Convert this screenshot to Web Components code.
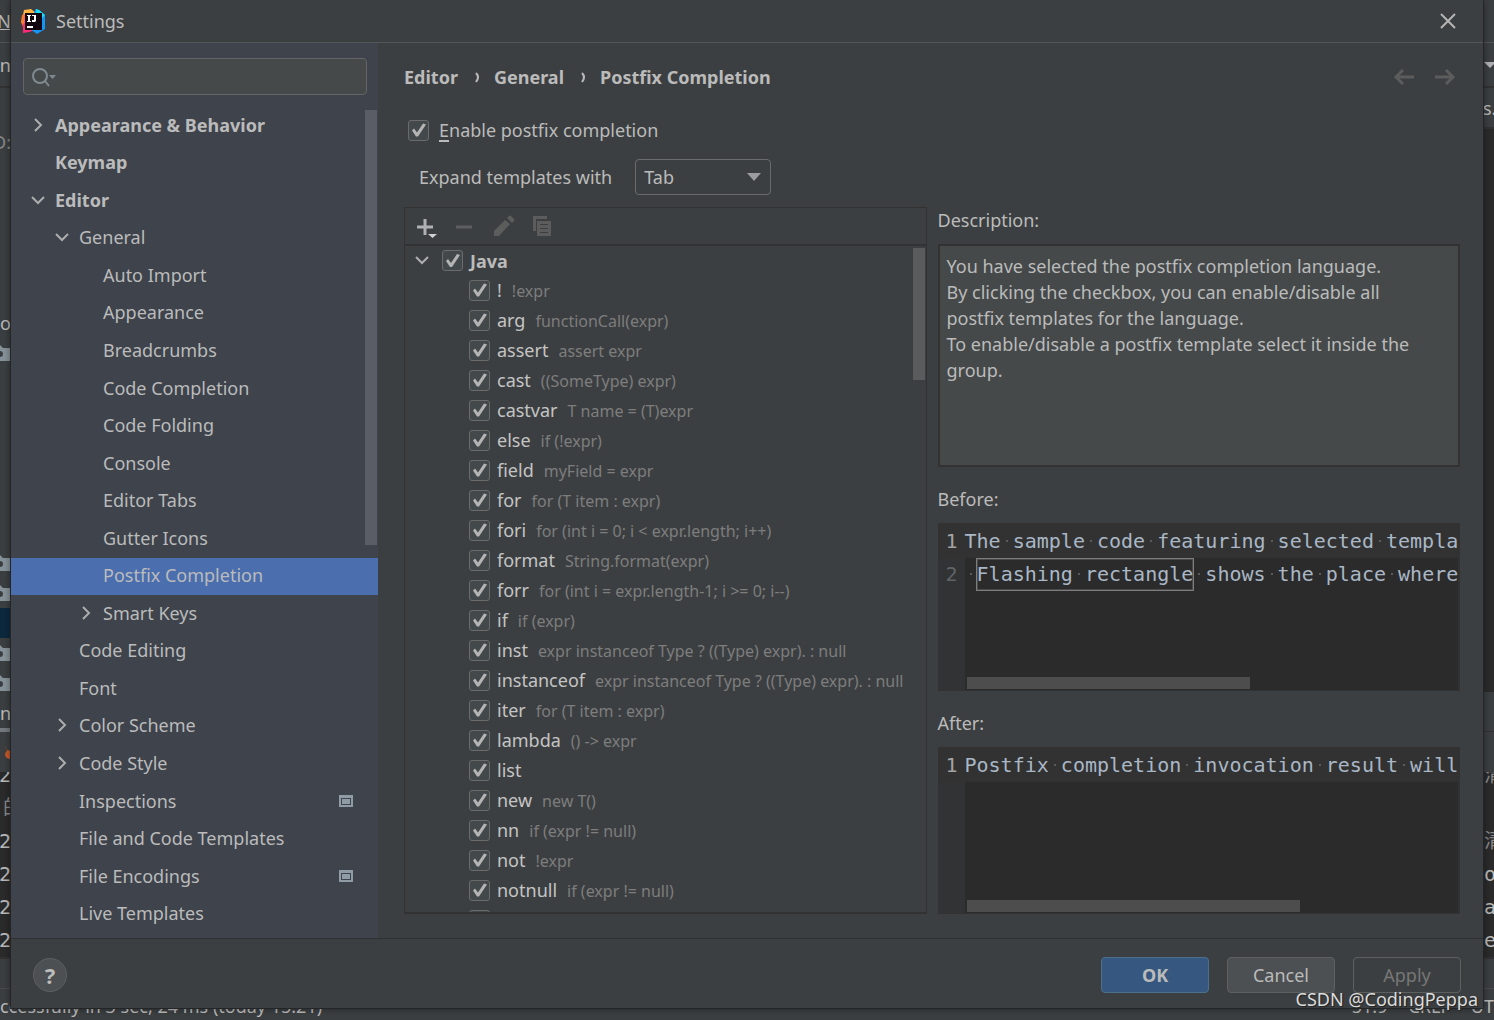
<!DOCTYPE html>
<html lang="en">
<head>
<meta charset="utf-8">
<title>Settings</title>
<style>
  html, body { height: 100%; margin: 0; }
  body {
    overflow: hidden;
    background: #3c3f41;
    color: #bbbbbb;
    font: 18px/26px "Noto Sans", "Open Sans", "Noto Sans CJK SC", sans-serif;
  }
</style>
</head>
<body>
<settings-app></settings-app>

<script>
const define = (name, html, setup) => {
  const template = document.createElement('template');
  template.innerHTML = html;
  customElements.define(name, class extends HTMLElement {
    constructor() {
      super();
      this.attachShadow({ mode: 'open' }).append(template.content.cloneNode(true));
    }
    connectedCallback() {
      if (setup && !this.ready) { this.ready = true; setup(this, this.shadowRoot); }
    }
  });
};

/* ---------- check box with its label ---------- */
define('check-box', `
  <style>
    :host { display: block; min-width: 0; }
    label { display: flex; align-items: center; gap: 7px; white-space: nowrap; }
    :host([wide]) label { gap: 10px; }
    input {
      appearance: none; flex: none; box-sizing: border-box; width: 21px; height: 21px; margin: 0;
      border: 1px solid #6b6b6b; border-radius: 3px; background: #43494a;
    }
    input::before {
      content: ""; display: block; width: 19px; height: 19px; background: #b4b4b4;
      clip-path: polygon(14px 3px, 17px 4px, 9px 16px, 7px 16px, 3px 10px, 5px 8px, 8px 12px);
    }
    input:not(:checked)::before { display: none; }
  </style>
  <label><input type="checkbox" checked><span><slot></slot></span></label>`);

/* ---------- row of the settings tree ---------- */
define('tree-row', `
  <style>
    :host { display: flex; align-items: center; min-height: 0; padding-right: 25px; white-space: nowrap; }
    :host([bold]) { font-weight: 700; }
    :host([selected]) { background: #4b6eaf; }
    .arrow { flex: none; box-sizing: content-box; width: 16px; height: 16px; padding: 0 9px 0 19px; }
    :host([level="1"]) .arrow { padding-left: 43px; }
    :host([level="2"]) .arrow { padding-left: 67px; }
    path { display: none; fill: none; stroke: #adadad; stroke-width: 2; }
    :host([state="closed"]) .closed, :host([state="open"]) .open { display: block; }
    .text { flex: 1; padding-bottom: 2px; }
    .project { display: none; flex: none; margin-bottom: 2px; }
    :host([project]) .project { display: block; }
  </style>
  <svg class="arrow" viewBox="0 0 16 16"><path class="closed" d="M5 1l6 6-6 6"/><path class="open" d="M2 4l6 6 6-6"/></svg>
  <span class="text"><slot></slot></span>
  <svg class="project" width="14" height="12" viewBox="0 0 14 12"><path style="display:block;fill:#8f9ba5;fill-rule:evenodd;stroke:none" d="M0 0h14v12H0zM2 3v7h10V3zM3 4h8v5H3z"/></svg>`);

/* ---------- left pane ---------- */
define('settings-sidebar', `
  <style>
    :host { display: flex; flex-direction: column; box-sizing: border-box; width: 367px; padding: 15px 0 5px; background: #3e434c; min-height: 0; }
    .search { display: flex; align-items: center; box-sizing: border-box; flex: none; height: 37px; margin: 0 11px 12px 12px; padding-left: 8px;
      border: 1px solid #646464; border-radius: 4px; background: #45494a; }
    input { flex: 1; min-width: 0; border: 0; outline: 0; background: none; color: inherit; font: inherit; }
    nav { position: relative; flex: 1; min-height: 0; display: grid; grid-auto-rows: 1fr; }
    .bar { position: absolute; top: 3px; right: 1px; width: 12px; height: 435px; background: #5a5d65; }
  </style>
  <div class="search">
    <svg width="25" height="20" viewBox="0 0 25 20" fill="none" stroke="#7f8b91" stroke-width="2"><circle cx="8" cy="9" r="7"/><path d="M13 14l4 5"/><path d="M17 8h7l-3.500 4z" fill="#7f8b91" stroke="none"/></svg>
    <input type="text" aria-label="Search settings">
  </div>
  <nav aria-label="Settings categories">
    <tree-row bold state="closed">Appearance &amp; Behavior</tree-row>
    <tree-row bold>Keymap</tree-row>
    <tree-row bold state="open">Editor</tree-row>
    <tree-row level="1" state="open">General</tree-row>
    <tree-row level="2">Auto Import</tree-row>
    <tree-row level="2">Appearance</tree-row>
    <tree-row level="2">Breadcrumbs</tree-row>
    <tree-row level="2">Code Completion</tree-row>
    <tree-row level="2">Code Folding</tree-row>
    <tree-row level="2">Console</tree-row>
    <tree-row level="2">Editor Tabs</tree-row>
    <tree-row level="2">Gutter Icons</tree-row>
    <tree-row level="2" selected>Postfix Completion</tree-row>
    <tree-row level="2" state="closed">Smart Keys</tree-row>
    <tree-row level="1">Code Editing</tree-row>
    <tree-row level="1">Font</tree-row>
    <tree-row level="1" state="closed">Color Scheme</tree-row>
    <tree-row level="1" state="closed">Code Style</tree-row>
    <tree-row level="1" project>Inspections</tree-row>
    <tree-row level="1">File and Code Templates</tree-row>
    <tree-row level="1" project>File Encodings</tree-row>
    <tree-row level="1">Live Templates</tree-row>
    <div class="bar"></div>
  </nav>`);

/* ---------- template list ---------- */
const TEMPLATES = [
  ['!', '!expr'], ['arg', 'functionCall(expr)'], ['assert', 'assert expr'], ['cast', '((SomeType) expr)'],
  ['castvar', 'T name = (T)expr'], ['else', 'if (!expr)'], ['field', 'myField = expr'], ['for', 'for (T item : expr)'],
  ['fori', 'for (int i = 0; i < expr.length; i++)'], ['format', 'String.format(expr)'],
  ['forr', 'for (int i = expr.length-1; i >= 0; i--)'], ['if', 'if (expr)'],
  ['inst', 'expr instanceof Type ? ((Type) expr). : null'], ['instanceof', 'expr instanceof Type ? ((Type) expr). : null'],
  ['iter', 'for (T item : expr)'], ['lambda', '() -> expr'], ['list', ''], ['new', 'new T()'],
  ['nn', 'if (expr != null)'], ['not', '!expr'], ['notnull', 'if (expr != null)'], ['', '']
];
define('template-list', `
  <style>
    :host { display: flex; flex-direction: column; box-sizing: border-box; min-width: 0; min-height: 0; border: 1px solid #323232; border-bottom-width: 2px; }
    .tools { display: flex; align-items: center; box-sizing: border-box; flex: none; height: 38px; padding: 2px 0 0 10px; gap: 15px; border-bottom: 2px solid #323232; }
    button { display: flex; width: 24px; height: 24px; padding: 0; border: 0; background: none; }
    .list { position: relative; flex: 1; min-height: 0; overflow: hidden; padding-right: 20px; }
    .group, .item { display: flex; align-items: center; height: 30px; overflow: hidden; }
    .group { height: 29px; padding-left: 9px; gap: 12px; font-weight: 700; }
    .item { padding-left: 64px; }
    .hint { margin-left: 10px; font-size: 16px; color: #7d7d7d; }
    .item check-box { color: #c4c4c4; }
    .bar { position: absolute; top: 2px; right: 1px; width: 12px; height: 132px; background: #595b5d; }
  </style>
  <div class="tools">
    <button aria-label="Add"><svg width="24" height="24"><path d="M2 12h16M10 4v16" stroke="#afb1b3" stroke-width="3"/><path d="M13 19h9l-4.500 4z" fill="#d0d0d0"/></svg></button>
    <button aria-label="Remove" disabled><svg width="24" height="24"><path d="M2 12h16" stroke="#5c5e60" stroke-width="3"/></svg></button>
    <button aria-label="Edit" disabled><svg width="24" height="24"><path d="M1 16L12 5l5 4L6 21H1zM14 3l2-2q1-1 2 0l3 3q1 1 0 2l-2 2z" fill="#5c5c5c"/></svg></button>
    <button aria-label="Duplicate" disabled><svg width="24" height="24"><path d="M1 1h14v3H4v12H1z" fill="#5c5c5c"/><path d="M5 6h14v15H5zM8 9v1h8V9zM8 13v1h8v-1zM8 17v1h8v-1z" fill="#5c5c5c" fill-rule="evenodd"/></svg></button>
  </div>
  <div class="list">
    <div class="group"><svg width="16" height="16" fill="none" stroke="#adadad" stroke-width="2"><path d="M2 4l6 6 6-6"/></svg><check-box>Java</check-box></div>
    <div class="bar"></div>
  </div>`, (host, root) => {
  const list = root.querySelector('.list');
  for (const [key, hint] of TEMPLATES) {
    const row = document.createElement('div');
    row.className = 'item';
    const box = document.createElement('check-box');
    box.append(key);
    if (hint) {
      const span = document.createElement('span');
      span.className = 'hint';
      span.textContent = hint;
      box.append(span);
    }
    row.append(box);
    list.append(row);
  }
});

/* ---------- small read-only code viewer ---------- */
define('code-viewer', `
  <style>
    :host { position: relative; display: flex; flex-direction: column; box-sizing: border-box; min-height: 0; min-width: 0; overflow: hidden;
      border: solid #323232; border-width: 2px 2px 1px 0; background: linear-gradient(90deg, #313335 27px, #2b2b2b 27px);
      font: 20px/33px "DejaVu Sans Mono", "Liberation Mono", monospace; color: #a9b7c6; }
    .line { display: flex; flex: none; height: 33px; white-space: pre; }
    .line:first-child { background: #323232; }
    .no { flex: none; width: 20px; padding-right: 7px; text-align: right; color: #606366; }
    .line:first-child .no { color: #a4a3a3; }
    .sp { background: linear-gradient(#5a5a5a, #5a5a5a) center / 2px 2px no-repeat; }
    .box { display: inline-block; height: 31px; line-height: 31px; margin-top: 1px; box-shadow: 0 0 0 1px #7d7d7d, inset 0 0 0 1px #4a4a4a; }
    .bar { position: absolute; bottom: 1px; left: 29px; height: 12px; width: 283px; background: #4d4d4d; }
    :host([long]) .bar { width: 333px; }
  </style>
  <div class="bar"></div>`, (host, root) => {
  const put = (parent, text) => {
    for (const part of text.split(/( )/)) {
      if (part === ' ') {
        const s = document.createElement('span');
        s.className = 'sp'; s.textContent = ' ';
        parent.append(s);
      } else parent.append(part);
    }
  };
  const lines = host.getAttribute('code').split('|').map((text, i) => {
    const line = document.createElement('div');
    line.className = 'line';
    const no = document.createElement('span');
    no.className = 'no'; no.textContent = i + 1;
    const code = document.createElement('span');
    const [a, b, c] = text.split(/[\[\]]/);
    put(code, a);
    if (b) {
      const box = document.createElement('span');
      box.className = 'box';
      put(box, b);
      code.append(box);
      put(code, c);
    }
    line.append(no, code);
    return line;
  });
  root.prepend(...lines);
});

/* ---------- right pane ---------- */
define('postfix-page', `
  <style>
    :host { display: flex; flex-direction: column; flex: 1; min-width: 0; min-height: 0; box-sizing: border-box; padding: 19px 23px 24px 26px; }
    .crumbs { display: flex; align-items: center; gap: 14px; height: 30px; flex: none; font-weight: 700; }
    .crumbs a { color: inherit; text-decoration: none; }
    .nav { display: flex; gap: 16px; margin: 0 3px 0 auto; }
    .nav button { display: flex; width: 24px; height: 24px; padding: 0; border: 0; background: none; }
    .enable { margin: 27px 0 0 4px; height: 22px; display: flex; align-items: center; }
    u { text-underline-offset: 3px; text-decoration-thickness: 2px; }
    .expand { display: flex; align-items: center; gap: 23px; margin: 18px 0 12px 15px; }
    .select { position: relative; }
    select { appearance: none; display: block; box-sizing: border-box; width: 136px; height: 36px; padding: 0 8px; border: 1px solid #6b6b6b; border-radius: 4px; background: #3c3f41; color: inherit; font: inherit; }
    .select svg { position: absolute; right: 10px; top: 14px; pointer-events: none; }
    .body { flex: 1; min-height: 0; display: grid; grid-template-columns: 1fr 1fr; grid-template-rows: 100%; gap: 11px; }
    .side { display: grid; grid-template-rows: auto 4fr auto 3fr auto 3fr; min-width: 0; min-height: 0; }
    h3 { margin: 0 0 11px; font: inherit; }
    h3 + * + h3 { margin-top: 19px; }
    .desc { min-height: 0; box-sizing: border-box; padding: 7px 30px 0 7px; border: 2px solid #323232; background: #45494a; overflow: hidden; }
    p { margin: 0; }
  </style>
  <div class="crumbs">
    <a href="#editor">Editor</a>
    <svg width="8" height="12" fill="none" stroke="#bbb" stroke-width="2"><path d="M4 2q4 4 0 9"/></svg>
    <a href="#general">General</a>
    <svg width="8" height="12" fill="none" stroke="#bbb" stroke-width="2"><path d="M4 2q4 4 0 9"/></svg>
    <a href="#postfix">Postfix Completion</a>
    <div class="nav">
      <button aria-label="Back" disabled><svg width="24" height="24" fill="none" stroke="#5c5c5c" stroke-width="3"><path d="M21 12H4M10 5l-7 7 7 7"/></svg></button>
      <button aria-label="Forward" disabled><svg width="24" height="24" fill="none" stroke="#5c5c5c" stroke-width="3"><path d="M2 12h17M13 5l7 7-7 7"/></svg></button>
    </div>
  </div>
  <div class="enable"><check-box wide><u>E</u>nable postfix completion</check-box></div>
  <div class="expand">
    <label for="key">Expand templates with</label>
    <div class="select"><select id="key"><option>Tab</option></select>
      <svg width="14" height="8"><path d="M0 0h14L7 8z" fill="#9a9c9d"/></svg></div>
  </div>
  <div class="body">
    <template-list></template-list>
    <div class="side">
      <h3>Description:</h3>
      <div class="desc">
        <p>You have selected the postfix completion language.</p>
        <p>By clicking the checkbox, you can enable/disable all postfix templates for the language.</p>
        <p>To enable/disable a postfix template select it inside the group.</p>
      </div>
      <h3>Before:</h3>
      <code-viewer code="The sample code featuring selected templa| [Flashing rectangle] shows the place where"></code-viewer>
      <h3>After:</h3>
      <code-viewer long code="Postfix completion invocation result will"></code-viewer>
    </div>
  </div>`);

/* ---------- dialog window ---------- */
define('settings-dialog', `
  <style>
    :host { display: flex; flex-direction: column; background: #3c3f41; box-shadow: 0 0 8px rgba(0,0,0,.5), 0 0 0 1px #2f3132; overflow: hidden; }
    header { display: flex; align-items: center; flex: none; height: 42px; padding: 0 23px 0 10px; border-bottom: 1px solid #515658; }
    h1 { flex: 1; margin: 0 0 0 10px; font: inherit; }
    header button { display: flex; width: 24px; height: 24px; padding: 4px; border: 0; background: none; }
    main { display: flex; flex: 1; min-height: 0; }
    footer { display: flex; align-items: center; gap: 18px; flex: none; box-sizing: border-box; height: 70px; padding: 2px 22px 0; border-top: 1px solid #2f3233; }
    footer button { box-sizing: border-box; width: 108px; height: 36px; padding: 0; border: 1px solid #5e6060; border-radius: 4px; background: #4c5052; color: inherit; font: inherit; }
    footer .ok { background: #365880; border-color: #4c708c; font-weight: 700; }
    footer .off { background: none; color: #777777; }
    footer .help { width: 34px; height: 34px; margin-right: auto; border-radius: 50%; font-weight: 700; font-size: 22px; line-height: 32px; }
  </style>
  <header>
    <svg width="25" height="25" viewBox="0 0 25 25">
      <path d="M3 1l7-1 5 4-8 9-7 1 1-3z" fill="#ffb443"/>
      <path d="M1 6l5-1v15H3L0 13z" fill="#fd7a2a"/>
      <path d="M4 4l4 1 1 8-6 1z" fill="#ff45c8"/>
      <path d="M2 15l6-4 9 9-9 3-6 1z" fill="#fc2a78"/>
      <path d="M13 3l2-3 3 1 6 5v14l-8 5-7-5 9-7z" fill="#1396f3"/>
      <path d="M15 0l3 1 6 5-3 3-6-5z" fill="#19dcf5"/>
      <path d="M4 4h17v17H4z" fill="#120710"/>
      <path d="M6 6h4v1H9v5h1v1H6v-1h1V7H6zM11 6h4v6l-1 1h-3v-2h2V7h-2zM6 17h6v2H6z" fill="#fff"/>
    </svg>
    <h1>Settings</h1>
    <button aria-label="Close"><svg width="16" height="16" fill="none" stroke="#b5b5b5" stroke-width="2"><path d="M1 1l14 14M15 1L1 15"/></svg></button>
  </header>
  <main><settings-sidebar></settings-sidebar><postfix-page></postfix-page></main>
  <footer>
    <button class="help" aria-label="Help">?</button>
    <button class="ok">OK</button>
    <button>Cancel</button>
    <button class="off" disabled>Apply</button>
  </footer>`);

/* ---------- the IDE behind the dialog ---------- */
define('ide-backdrop', `
  <style>
    :host { display: flex; flex-direction: column; background: #3c3f41; height: 100%; }
    .mid { display: flex; justify-content: space-between; flex: 1; min-height: 0; overflow: hidden; }
    .edge { width: 11px; overflow: hidden; }
    .edge > div { display: flex; align-items: center; box-sizing: border-box; height: var(--h); overflow: hidden; white-space: nowrap; }
    .l > div { justify-content: flex-end; }
    .l > .start { justify-content: flex-start; padding-left: 3px; }
    .dark { background: #2b2b2b; }
    .line { background: #323232; }
    .lite { background: #515658; }
    .log { font: 20px/33px "DejaVu Sans Mono", "Noto Sans CJK SC", monospace; background: #2b2b2b; }
    .r > .log { padding-left: 1px; }
    .edge > .cut { align-items: flex-end; }
    .dim { color: #888; }
    footer { display: flex; align-items: center; gap: 21px; flex: none; height: 29px; padding-top: 2px; border-top: 1px solid #4b4b4b; overflow: hidden; white-space: nowrap; }
    .status { flex: 1; }
    svg { flex: none; }
  </style>
  <div class="mid">
    <div class="edge l"></div>
    <div class="edge r"></div>
  </div>
  <footer><span class="status">ccessfully in 3 sec, 24 ms (today 15:21)</span><span>51:9</span><span>CRLF</span><span>UT</span></footer>`,
(host, root) => {
  const folder = '<svg width="11" height="17"><path d="M0 0l3 3h8v13H0v-4a3 3 0 0 0 0-6z" fill="#87939a"/></svg>';
  const flame = '<svg width="8" height="16"><path d="M2 1l2 5 4 1v8q-5 0-6-4 0-3 2-4z" fill="#c75a2b"/></svg>';
  const caret = '<svg width="11" height="6"><path d="M1 0h12L7 6z" fill="#afb1b3"/></svg>';
  const fill = (side, rows) => {
    for (const [h, html, cls = '', bg = ''] of rows) {
      const d = document.createElement('div');
      d.className = cls;
      d.style.background = bg;
      d.style.setProperty('--h', h + 'px');
      d.innerHTML = html;
      root.querySelector(side).append(d);
    }
  };
  fill('.l', [
    [42, '<u>N</u>'], [1, '', 'lite'], [43, 'in'], [2, '', 'line'], [108, 'D:', 'dim'], [112, ''], [30, 'co'],
    [30, folder], [180, ''], [30, folder], [30, folder], [30, '', '', '#0d293e'], [30, folder], [30, folder],
    [30, 'n'], [4, '', '', '#747a80'], [40, flame],
    [20, '2', 'log cut'], [33, '的', 'log dim start'], [33, '2', 'log'], [33, '2', 'log'], [33, '2', 'log'],
    [33, '2', 'log'], [2, '', 'line']
  ]);
  fill('.r', [
    [42, ''], [1, '', 'lite'], [43, caret], [2, '', 'line'], [39, 's.'], [2, '', 'line'], [563, '', 'dark'],
    [39, ''], [1, '', 'line'], [40, ''],
    [20, '清', 'log cut dim'], [33, '', 'dark'], [33, '清', 'log dim'], [33, 'o', 'log'], [33, 'a', 'log'],
    [33, 'e', 'log'], [2, '', 'line']
  ]);
});

define('settings-app', `
  <style>
    :host { display: block; position: relative; height: 100vh; overflow: hidden; }
    settings-dialog { position: absolute; inset: 0 11px 12px; }
    .mark { position: absolute; right: 16px; bottom: 8px; color: #dcdcdc; text-shadow: 1px 1px 1px #222; }
  </style>
  <ide-backdrop></ide-backdrop>
  <settings-dialog></settings-dialog>
  <div class="mark">CSDN @CodingPeppa</div>`);
</script>
</body>
</html>
